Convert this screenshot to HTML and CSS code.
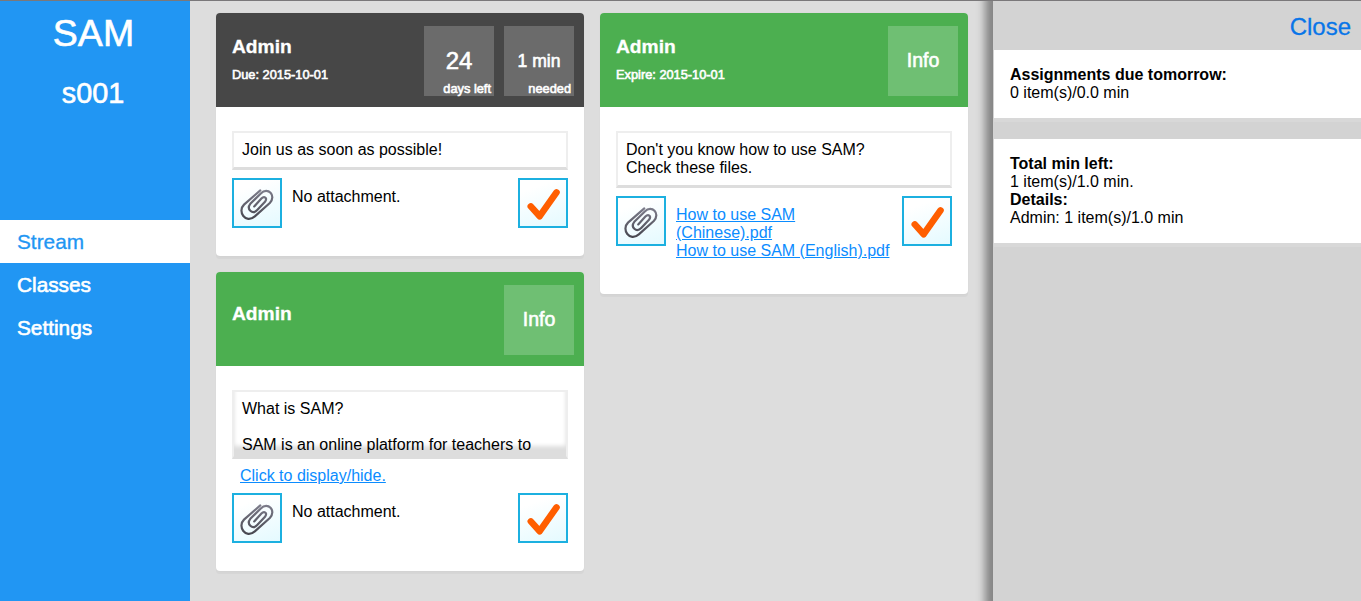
FILE: index.html
```html
<!DOCTYPE html>
<html lang="en">
<head>
<meta charset="utf-8">
<title>SAM</title>
<link rel="stylesheet" href="styles.css">
</head>
<body>
<svg class="defs" width="0" height="0">
  <defs>
    <linearGradient id="metal" x1="0" y1="0" x2="0" y2="50" gradientUnits="userSpaceOnUse">
      <stop offset=".2" stop-color="#80808f"/><stop offset=".85" stop-color="#45454d"/>
    </linearGradient>
    <symbol id="clip" viewBox="0 0 50 50">
      <path d="M28.3 12.4 L12 26.6 C5 33.5 13.6 46.2 22.8 38.4 L37.8 25 C44.8 17.5 35.8 8.2 28.8 15.4 L18.3 25.8 C14.2 31.2 20.3 37 25.2 32 L33 23.8 C35.8 19.8 32.2 17.6 29.4 20.6 L22.2 28.4" fill="none" stroke="url(#metal)" stroke-width="2.2" stroke-linecap="round" stroke-linejoin="round"/>
    </symbol>
    <symbol id="check" viewBox="0 0 50 50">
      <path d="M12.8 28.4 L21.7 38.2 L38.5 14.4" fill="none" stroke="#ff5e00" stroke-width="6.6" stroke-linecap="round" stroke-linejoin="round"/>
    </symbol>
  </defs>
</svg>
<div class="app">
  <nav class="sidebar">
    <div class="brand">SAM</div>
    <div class="user">s001</div>
    <div class="menu">
      <a class="menu-item active">Stream</a>
      <a class="menu-item">Classes</a>
      <a class="menu-item">Settings</a>
    </div>
  </nav>
  <main class="stream">
    <div class="column">
      <article class="card">
        <header class="card-head dark">
          <div class="heading"><div class="title">Admin</div><div class="date">Due: 2015-10-01</div></div>
          <div class="tile"><span class="days">24</span><small>days left</small></div>
          <div class="tile"><span>1 min</span><small>needed</small></div>
        </header>
        <div class="card-body">
          <div class="note">Join us as soon as possible!</div>
          <div class="actions">
            <div class="button"><svg><use href="#clip"/></svg></div>
            <div class="files">No attachment.</div>
            <div class="button"><svg><use href="#check"/></svg></div>
          </div>
        </div>
      </article>
      <article class="card">
        <header class="card-head">
          <div class="heading single"><div class="title">Admin</div></div>
          <div class="tile"><span class="info">Info</span></div>
        </header>
        <div class="card-body">
          <div class="note folded">What is SAM?<br><br>SAM is an online platform for teachers to</div>
          <a class="toggle link">Click to display/hide.</a>
          <div class="actions">
            <div class="button"><svg><use href="#clip"/></svg></div>
            <div class="files">No attachment.</div>
            <div class="button"><svg><use href="#check"/></svg></div>
          </div>
        </div>
      </article>
    </div>
    <div class="column">
      <article class="card">
        <header class="card-head">
          <div class="heading"><div class="title">Admin</div><div class="date">Expire: 2015-10-01</div></div>
          <div class="tile"><span class="info">Info</span></div>
        </header>
        <div class="card-body">
          <div class="note">Don't you know how to use SAM?<br>Check these files.</div>
          <div class="actions">
            <div class="button"><svg><use href="#clip"/></svg></div>
            <div class="files"><a class="link">How to use SAM<br>(Chinese).pdf</a><br><a class="link">How to use SAM (English).pdf</a></div>
            <div class="button"><svg><use href="#check"/></svg></div>
          </div>
        </div>
      </article>
    </div>
  </main>
  <aside class="panel">
    <div class="panel-top"><a class="close">Close</a></div>
    <section class="summary"><b>Assignments due tomorrow:</b><br>0 item(s)/0.0 min</section>
    <section class="summary"><b>Total min left:</b><br>1 item(s)/1.0 min.<br><b>Details:</b><br>Admin: 1 item(s)/1.0 min</section>
  </aside>
</div>
</body>
</html>
```
FILE: styles.css
```css
* { box-sizing: border-box; }
body {
  margin: 0;
  height: 601px;
  overflow: hidden;
  border-top: 1px solid #7a787a;
  background: #ddd;
  color: #000;
  font: 16px/18px "Liberation Sans", Arial, sans-serif;
}
.defs { display: block; }
.app { display: flex; height: 600px; overflow: hidden; }
.sidebar {
  width: 190px;
  flex: none;
  background: #2196f3;
  color: #fff;
  -webkit-text-stroke: .6px #fff;
}
.brand { height: 66px; font-size: 37.5px; line-height: 64px; text-align: center; padding-right: 3px; }
.user { height: 52px; font-size: 28.8px; line-height: 53px; text-align: center; padding-right: 4px; }
.menu { margin-top: 101px; }
.menu-item { display: block; height: 43px; padding-left: 17px; font-size: 20.8px; line-height: 43px; }
.menu-item.active { background: #fff; color: #2196f3; -webkit-text-stroke: .3px #2196f3; }
.stream { flex: none; width: 803px; display: flex; align-items: flex-start; gap: 16px; padding: 12px 0 0 26px; }
.column { width: 368px; display: flex; flex-direction: column; gap: 16px; }
.card { background: #fff; border-radius: 4px; box-shadow: 0 3px 1px rgba(0,0,0,.035), 0 0 2px rgba(0,0,0,.04); }
.card-head {
  display: flex;
  gap: 10px;
  height: 94px;
  padding: 13px 10px 0 16px;
  border-radius: 4px 4px 0 0;
  background: #4caf50;
  color: #fff;
}
.card-head.dark { background: #474747; }
.heading { flex: 1; padding-top: 9px; }
.heading.single { padding-top: 17px; }
.title { font-size: 19.2px; line-height: 24px; font-weight: bold; -webkit-text-stroke: .3px #fff; }
.date { margin-top: 8px; font-size: 12.8px; line-height: 16px; -webkit-text-stroke: .6px #fff; }
.tile {
  width: 70px;
  height: 70px;
  display: flex;
  flex-direction: column;
  align-items: center;
  padding-top: 20px;
  font-size: 17.6px;
  line-height: 30px;
  background: rgba(255,255,255,.2);
  -webkit-text-stroke: .6px #fff;
}
.tile .days { font-size: 24px; }
.tile .info { font-size: 19.5px; line-height: 28px; }
.tile small { align-self: flex-end; padding-right: 3px; margin-top: 5px; font-size: 12.8px; line-height: 16px; }
.card-body { padding: 24px 16px 28px; }
.note { padding: 8px; border: 2px solid #eee; border-bottom: 3px solid #ddd; }
.note.folded { height: 69px; overflow: hidden; box-shadow: inset 0 -10px 4px #ddd; }
.toggle { display: block; padding: 8px 8px 0; }
.link { color: #0b8cff; text-decoration: underline; }
.actions { display: flex; margin-top: 8px; }
.button {
  width: 50px;
  height: 50px;
  flex: none;
  border: 2px solid #1cb0e0;
  background: linear-gradient(160deg, #fff 20%, #e4faff);
}
.button svg { display: block; width: 50px; height: 50px; margin: -2px; }
.files { flex: 1; padding: 10px 0 6px 10px; white-space: nowrap; }
.panel {
  flex: 1;
  position: relative;
  padding-left: 1px;
  background: #d3d3d3;
  box-shadow: 0 0 8px 8px #858585;
}
.panel-top { height: 49px; padding: 11px 10px 0 0; text-align: right; }
.close { color: #0875e8; font-size: 24px; line-height: 30px; -webkit-text-stroke: .3px #0875e8; }
.summary { padding: 16px; margin-bottom: 21px; background: #fff; box-shadow: 0 4px 0 #d8d8d8; }
```
